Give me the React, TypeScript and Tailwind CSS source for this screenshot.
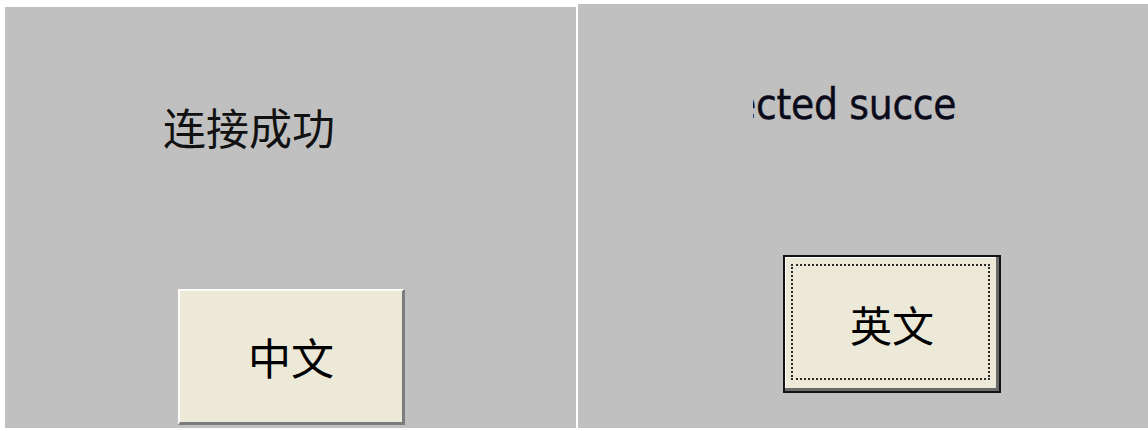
import React from "react";

const cjk = { fontFamily: '"Noto Sans CJK SC", "Noto Sans", sans-serif' };
const latin = {
  fontFamily: '"DejaVu Sans Condensed", "DejaVu Sans", sans-serif',
  fontStretch: "condensed" as const,
};

export default function App() {
  return (
    <div className="w-[1148px] h-[431px] bg-white flex items-start overflow-hidden">
      {/* Left panel */}
      <div className="ml-[5px] mt-[7px] w-[571px] h-[421px] bg-[#c0c0c0] flex flex-col">
        <div
          className="pt-[98px] pl-[158px] text-[43px] leading-none text-[#111] whitespace-nowrap"
          style={cjk}
        >
          连接成功
        </div>
        <div className="mt-auto mb-[3px] ml-[173px]">
          <div
            className="w-[227px] h-[136px] bg-[#ece9d8] border-t-2 border-l-2 border-t-[#fbfbf8] border-l-[#fbfbf8] border-r-[3px] border-b-[3px] border-r-[#7c7c7c] border-b-[#7c7c7c] flex items-center justify-center text-[43px] leading-none text-black"
            style={cjk}
          >
            中文
          </div>
        </div>
      </div>

      {/* Right panel */}
      <div className="ml-[2px] mt-[4px] w-[570px] h-[424px] bg-[#c0c0c0] flex flex-col">
        <div className="pt-[80px] pl-[175px]">
          <div
            className="w-[205px] overflow-hidden flex justify-center whitespace-nowrap text-[42px] leading-none text-[#0a0a1a] tracking-[-0.3px] [-webkit-text-stroke:0.4px_#0a0a1a]"
            style={latin}
          >
            <span className="shrink-0">Connected successfully</span>
          </div>
        </div>
        <div className="mt-[129px] ml-[205px]">
          <div
            className="relative w-[218px] h-[138px] bg-[#ece9d8] border-2 border-[#141414] shadow-[inset_-3px_-3px_0_#6a6a6a,inset_1px_1px_0_#ffffff] flex items-center justify-center text-[42px] leading-none text-black"
            style={cjk}
          >
            <div className="absolute top-[7px] left-[6px] right-[9px] bottom-[11px] border-2 border-dotted border-[#2a2a2a]" />
            英文
          </div>
        </div>
      </div>
    </div>
  );
}
